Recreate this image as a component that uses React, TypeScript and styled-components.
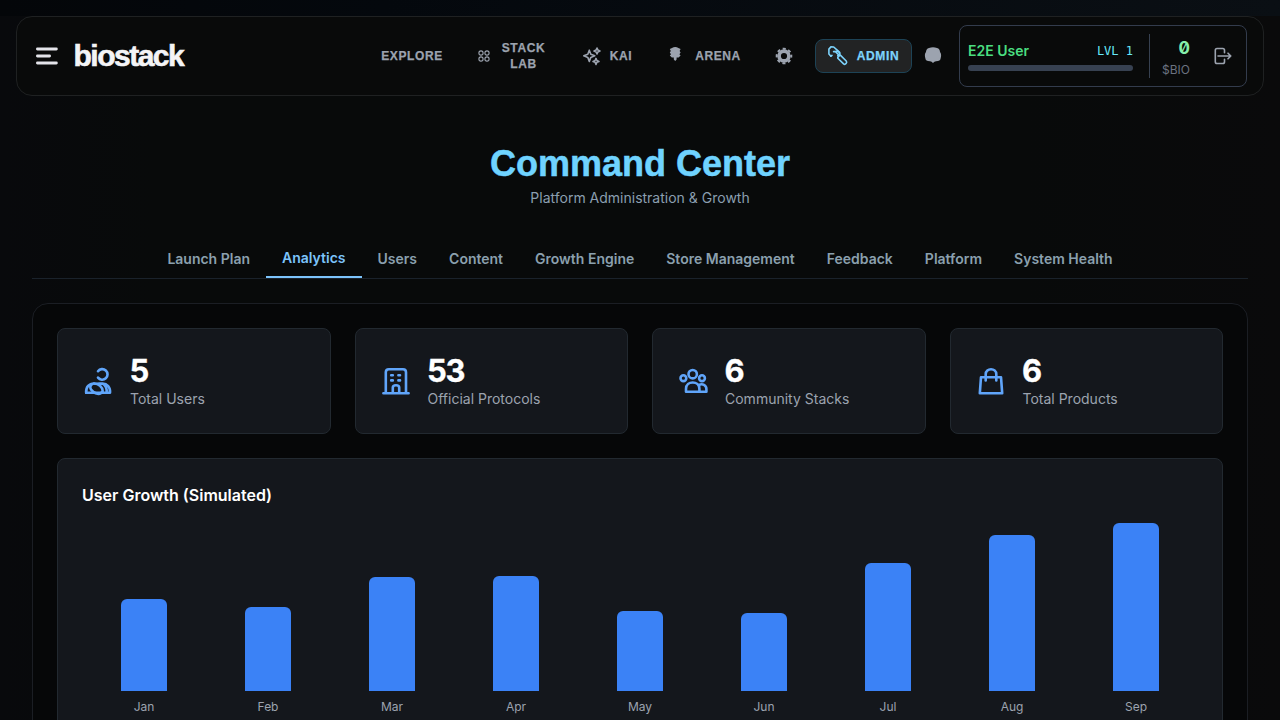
import React from "react";
import styled, { createGlobalStyle, css } from "styled-components";

const Global = createGlobalStyle`
  * { box-sizing: border-box; }
  body {
    margin: 0;
    height: 720px;
    overflow: hidden;
    background: #08090b;
    font-family: Inter, "Liberation Sans", sans-serif;
    color: #fff;
  }
`;

const Page = styled.div`
  height: 720px;
  overflow: hidden;
  padding-top: 16px;
  background:
    linear-gradient(90deg, #040609 0%, #04080d 30%, #0a0f14 100%) 0 0 / 100% 16px no-repeat,
    linear-gradient(90deg, #08090c 0%, #080a0a 12%, #080a0a 80%, #0a0a0b 100%);
`;

const Header = styled.header`
  display: flex;
  align-items: center;
  height: 80px;
  margin: 0 16px;
  padding: 0 16px 0 18px;
  border: 1px solid #1f2122;
  border-radius: 16px;
  background: #090a0a;
`;

const MenuButton = styled.button`
  display: flex;
  padding: 0;
  border: 0;
  background: none;
`;

const Brand = styled.div`
  margin-left: 14.5px;
  width: 113px;
  font: 700 30px/40px "Liberation Sans", Arial, sans-serif;
  letter-spacing: -1.5px;
  color: #f4f4f6;
  -webkit-text-stroke: 0.6px #f4f4f6;
`;

const Nav = styled.nav`
  display: flex;
  align-items: center;
  margin-left: auto;
  color: #9ca3af;
`;

const NavItem = styled.a<{ $active?: boolean; $w: number; $gap?: number }>`
  display: flex;
  align-items: center;
  justify-content: center;
  gap: ${(p) => p.$gap ?? 8}px;
  width: ${(p) => p.$w}px;
  height: 34px;
  font: 700 12px/16px "Liberation Sans", Arial, sans-serif;
  letter-spacing: 0.6px;
  text-align: center;
  -webkit-text-stroke: 0.25px currentColor;
  ${(p) =>
    p.$active &&
    css`
      padding-right: 1px;
      color: #7dd3fc;
      background: #222324;
      border: 1px solid #1d4356;
      border-radius: 8px;
    `}
`;

const UserBox = styled.div`
  display: flex;
  align-items: center;
  width: 288px;
  height: 62px;
  margin-left: 5px;
  padding: 0 8px;
  border: 1px solid #333c4d;
  border-radius: 8px;
`;

const Profile = styled.div`
  width: 165px;
`;

const ProfileRow = styled.div`
  display: flex;
  justify-content: space-between;
  height: 20px;
  margin-bottom: 4px;
`;

const UserName = styled.span`
  font-size: 14px;
  line-height: 20px;
  font-weight: 600;
  color: #4ade80;
`;

const Level = styled.span`
  font: 400 12px/20px "DejaVu Sans Mono", monospace;
  color: #67e8f9;
`;

const Progress = styled.div`
  height: 6px;
  border-radius: 3px;
  background: #374151;
`;

const Balance = styled.div`
  display: flex;
  flex-direction: column;
  align-items: flex-end;
  width: 41px;
  height: 44px;
  margin-left: 16px;
  border-left: 1px solid #374151;
`;

const Amount = styled.span`
  font-size: 17px;
  line-height: 28px;
  font-weight: 700;
  font-feature-settings: "zero" 1;
  color: #86efac;
`;

const Unit = styled.span`
  font-size: 12px;
  line-height: 16px;
  color: #6b7280;
`;

const Logout = styled.button`
  display: flex;
  margin-left: 22.5px;
  padding: 0;
  border: 0;
  background: none;
  color: #9ca3af;
`;

const Main = styled.main`
  padding: 44px 32px 0;
`;

const Title = styled.h1`
  margin: 0;
  font: 700 36px/48px "Liberation Sans", Arial, sans-serif;
  text-align: center;
  color: #6fd3ff;
  -webkit-text-stroke: 0.5px #6fd3ff;
`;

const Subtitle = styled.p`
  margin: 0;
  font-size: 14px;
  line-height: 20px;
  text-align: center;
  color: #8b9fb0;
`;

const Tabs = styled.div`
  display: flex;
  justify-content: center;
  height: 39px;
  margin-top: 32px;
  border-bottom: 1px solid #1a222b;
`;

const Tab = styled.button<{ $active?: boolean }>`
  height: 38px;
  padding: 0 16px;
  border: 0;
  border-bottom: ${(p) => (p.$active ? "2px solid #7cc4fb" : "0")};
  background: none;
  font: 600 14px/20px Inter, sans-serif;
  color: ${(p) => (p.$active ? "#7cc4fb" : "#8ba0ae")};
`;

const Panel = styled.section`
  height: 500px;
  margin-top: 24px;
  padding: 24px;
  border: 1px solid #1b1e24;
  border-radius: 16px;
  background: #060708;
`;

const Stats = styled.div`
  display: grid;
  grid-template-columns: repeat(4, 1fr);
  gap: 24px;
`;

const cardStyle = css`
  border: 1px solid #222930;
  border-radius: 8px;
  background: #14171c;
`;

const StatCard = styled.div`
  ${cardStyle}
  display: flex;
  align-items: center;
  gap: 16px;
  height: 106px;
  padding: 0 24px;
  color: #60a5fa;
`;

const StatValue = styled.div`
  padding: 1px 0;
  font-size: 31px;
  line-height: 34px;
  font-weight: 700;
  letter-spacing: -1.3px;
  text-indent: -0.5px;
  color: #fff;
  -webkit-text-stroke: 0.3px #fff;
`;

const StatLabel = styled.div`
  font-size: 14px;
  line-height: 20px;
  color: #9ca3af;
`;

const ChartCard = styled.div`
  ${cardStyle}
  height: 320px;
  margin-top: 24px;
  padding: 24px;
`;

const ChartTitle = styled.h2`
  margin: 0;
  font-size: 16px;
  line-height: 24px;
  font-weight: 600;
`;

const Chart = styled.div`
  display: grid;
  grid-template-columns: repeat(9, 1fr);
  height: 208px;
`;

const Column = styled.div`
  display: flex;
  flex-direction: column;
  align-items: center;
  justify-content: flex-end;
`;

const Bar = styled.div`
  width: 46px;
  border-radius: 6px 6px 0 0;
  background: #3b82f6;
`;

const Month = styled.span`
  margin-top: 8px;
  font-size: 12px;
  line-height: 16px;
  color: #9ca3af;
`;

const MenuIcon = () => (
  <svg width="24" height="24" viewBox="0 0 24 24" fill="none" stroke="#e4e4ea" strokeWidth="2.8" strokeLinecap="round">
    <path d="M2.4 5h19M2.4 12h12.2M2.4 19h19" />
  </svg>
);

const LabIcon = () => (
  <svg width="12" height="12" viewBox="0 0 12 12" fill="none" stroke="currentColor" strokeWidth="1.1">
    <circle cx="3" cy="3" r="2.1" />
    <circle cx="9" cy="3" r="2.1" />
    <circle cx="3" cy="9" r="2.1" />
    <circle cx="9" cy="9" r="2.1" />
  </svg>
);

const SparkIcon = () => (
  <svg width="20" height="20" viewBox="0 0 20 20" fill="none" stroke="currentColor" strokeWidth="1.6" strokeLinejoin="round">
    <path d="M7.3 4.2 8.8 8.2 12.8 9.8 8.8 11.4 7.3 15.4 5.8 11.4 1.8 9.8 5.8 8.2Z" />
    <path d="M15 2 15.9 4.1 18 5 15.9 5.9 15 8 14.1 5.9 12 5 14.1 4.1Z" />
    <path d="M14 12.4 14.9 14.5 17 15.4 14.9 16.3 14 18.4 13.1 16.3 11 15.4 13.1 14.5Z" />
  </svg>
);

const ArenaIcon = () => (
  <svg width="20" height="20" viewBox="0 0 20 20" fill="currentColor">
    <path d="M7 2C9 .5 11.4 .5 13.4 2L15.6 3 14.6 5 15.6 6.6 14.4 8.2 15.6 9.6 13.6 11.6H11.6V13.6L10.2 15 8.8 13.6V11.6H6.8L4.8 9.6 6 8.2 4.8 6.6 5.8 5 4.8 3Z" />
  </svg>
);

const GearIcon = () => (
  <svg width="18" height="18" viewBox="0 0 18 18" fill="none" stroke="currentColor">
    <circle cx="9" cy="9" r="4.9" strokeWidth="3.6" />
    <circle cx="9" cy="9" r="7.3" strokeWidth="2" strokeDasharray="3.1 2.633" strokeDashoffset="1.55" />
  </svg>
);

const LinkIcon = () => (
  <svg width="22" height="22" viewBox="0 0 22 22" fill="none" stroke="currentColor" strokeWidth="1.6" strokeLinejoin="round" strokeLinecap="round">
    <path d="M3.9 11.2 1.9 9V4.1L3.9 1.9 6.7 2 9.9 4.8 12.6 7.4" />
    <path d="M6.6 6.6 11 6.2 13 8.2 10.8 10.6M3.9 11.2 5 10.4M8.4 6.6 10.8 9" />
    <path d="M10.8 12.4 13.1 9.9 19.2 16C20.6 17.6 18.3 20.2 16.6 18.9L10.8 13.2Z" />
  </svg>
);

const BlobIcon = () => (
  <svg width="18" height="18" viewBox="0 0 18 18" fill="currentColor">
    <path d="M5 1Q9-.4 13 1C15 1.4 16 3.2 16 5 17.2 6.4 17.4 9 16.7 11 16.6 13.2 15 14.2 12 14.2L10.4 14.8 9 16 7.6 14.8 6 14.2C3 14.2 1.4 13.2 1.3 11 .6 9 .8 6.4 2 5 2 3.2 3 1.4 5 1Z" />
  </svg>
);

const LogoutIcon = () => (
  <svg width="20" height="20" viewBox="0 0 20 20" fill="none" stroke="currentColor" strokeWidth="1.6" strokeLinecap="round" strokeLinejoin="round">
    <path d="M11.5 6.7V4.3Q11.5 2.5 9.8 2.5H4Q2.3 2.5 2.3 4.3V15.7Q2.3 17.5 4 17.5H9.8Q11.5 17.5 11.5 15.7V13.3M5 10H17.8M15 7.2 17.8 10 15 12.8" />
  </svg>
);

const iconProps = {
  width: 32,
  height: 32,
  viewBox: "0 0 32 32",
  fill: "none",
  stroke: "currentColor",
  strokeWidth: 2.6,
  strokeLinecap: "round" as const,
  strokeLinejoin: "round" as const,
};

const UsersIcon = () => (
  <svg {...iconProps}>
    <path d="M16 6.2A5.3 5.3 0 1 1 16 12.6" />
    <path d="M4.2 27.8C3.7 22 7.2 18.5 12 18.5 16.6 18.5 20.6 22 20.7 26.2 18.6 30.2 12.6 29.6 9 24.6 7.6 22.4 8.4 20.2 10.5 18.9" />
    <path d="M4.2 27.8H28C28.6 22 25 18.5 20.6 18.5 17.4 18.5 15 19.2 12 18.5M20.6 18.5C24 20.6 25 24 24.6 27.6" />
  </svg>
);

const BuildingIcon = () => (
  <svg {...iconProps}>
    <path d="M3.4 28.2H28.6M5.8 28V7.3Q5.8 4.2 8.8 4.2H23Q26 4.2 26 7.3V28M12.8 28V22.6Q12.8 20.2 16 20.2 19.2 20.2 19.2 22.6V28M11.2 10.2H12.8M18.4 10.2H20M11.2 15.4H12.8M18.4 15.4H20" />
  </svg>
);

const GroupIcon = () => (
  <svg {...iconProps}>
    <circle cx="15.7" cy="9.2" r="4.2" />
    <circle cx="6.4" cy="13.2" r="2.9" />
    <circle cx="25" cy="13.2" r="2.9" />
    <path d="M9 26.8V24C9 15.3 22.4 15.3 22.4 24V26.8ZM22.4 26.8H29.4V24C29.4 20.2 25.4 18.2 22 20" />
  </svg>
);

const BagIcon = () => (
  <svg {...iconProps}>
    <path d="M6 12.2H26L27.2 28.3H4.8ZM10.7 15.5V9.2C10.7 2.5 21.3 2.5 21.3 9.2V15.5" />
  </svg>
);

const tabs = ["Launch Plan", "Analytics", "Users", "Content", "Growth Engine", "Store Management", "Feedback", "Platform", "System Health"];

const stats = [
  { value: 5, label: "Total Users", Icon: UsersIcon },
  { value: 53, label: "Official Protocols", Icon: BuildingIcon },
  { value: 6, label: "Community Stacks", Icon: GroupIcon },
  { value: 6, label: "Total Products", Icon: BagIcon },
];

const growth: [string, number][] = [
  ["Jan", 92], ["Feb", 84], ["Mar", 114], ["Apr", 115], ["May", 80],
  ["Jun", 78], ["Jul", 128], ["Aug", 156], ["Sep", 168],
];

export default function App() {
  return (
    <>
      <Global />
      <Page>
        <Header>
          <MenuButton aria-label="Menu"><MenuIcon /></MenuButton>
          <Brand>biostack</Brand>
          <Nav>
            <NavItem $w={100}>EXPLORE</NavItem>
            <NavItem $w={99} $gap={12}><LabIcon /><span>STACK<br />LAB</span></NavItem>
            <NavItem $w={92}><SparkIcon />KAI</NavItem>
            <NavItem $w={100} $gap={10}><ArenaIcon />ARENA</NavItem>
            <NavItem $w={62}><GearIcon /></NavItem>
            <NavItem $w={97} $active><LinkIcon />ADMIN</NavItem>
            <NavItem $w={42}><BlobIcon /></NavItem>
          </Nav>
          <UserBox>
            <Profile>
              <ProfileRow>
                <UserName>E2E User</UserName>
                <Level>LVL 1</Level>
              </ProfileRow>
              <Progress />
            </Profile>
            <Balance>
              <Amount>0</Amount>
              <Unit>$BIO</Unit>
            </Balance>
            <Logout aria-label="Log out"><LogoutIcon /></Logout>
          </UserBox>
        </Header>
        <Main>
          <Title>Command Center</Title>
          <Subtitle>Platform Administration &amp; Growth</Subtitle>
          <Tabs>
            {tabs.map((t) => (
              <Tab key={t} $active={t === "Analytics"}>{t}</Tab>
            ))}
          </Tabs>
          <Panel>
            <Stats>
              {stats.map(({ value, label, Icon }) => (
                <StatCard key={label}>
                  <Icon />
                  <div>
                    <StatValue>{value}</StatValue>
                    <StatLabel>{label}</StatLabel>
                  </div>
                </StatCard>
              ))}
            </Stats>
            <ChartCard>
              <ChartTitle>User Growth (Simulated)</ChartTitle>
              <Chart>
                {growth.map(([m, h]) => (
                  <Column key={m}>
                    <Bar style={{ height: h }} />
                    <Month>{m}</Month>
                  </Column>
                ))}
              </Chart>
            </ChartCard>
          </Panel>
        </Main>
      </Page>
    </>
  );
}
